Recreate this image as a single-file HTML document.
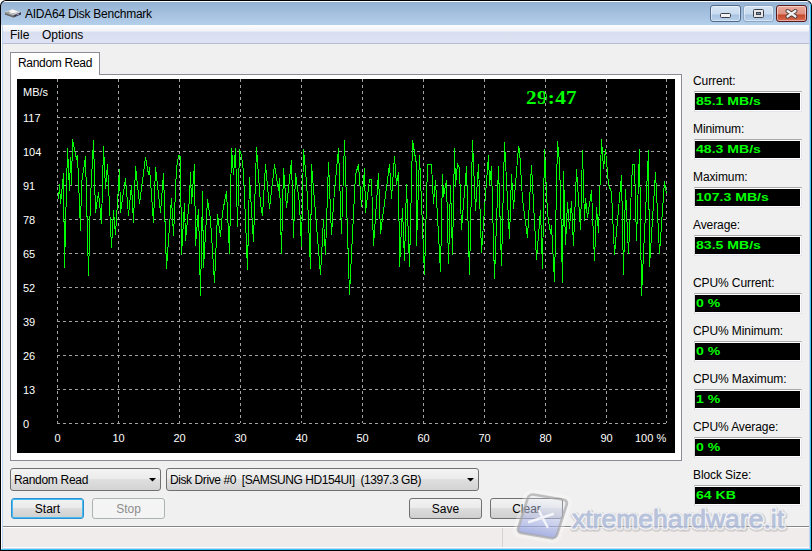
<!DOCTYPE html>
<html><head><meta charset="utf-8">
<style>
*{margin:0;padding:0;box-sizing:border-box}
html,body{width:812px;height:551px;overflow:hidden;background:#fff}
body{position:relative;font-family:"Liberation Sans",sans-serif;font-size:12px;color:#000}
.a{position:absolute}
#win{left:0;top:0;width:812px;height:551px;background:#000;border-radius:6px 6px 0 0}
#frame{left:1px;top:1px;width:810px;height:549px;border-radius:5px 5px 0 0;
 background:linear-gradient(#fafcfe 0,#fafcfe 1px,#94b2d3 1px,#b4cfea 24px,#c3dbf2 100%)}
#fr-r1{left:809px;top:5px;width:1px;height:544px;background:#c9d3ee}
#fr-r2{left:810px;top:4px;width:1px;height:546px;background:#35c3ef}
#fr-l{left:1px;top:25px;width:1px;height:525px;background:#fff}
#fr-l2{left:2px;top:25px;width:1px;height:524px;background:#bcd5f0}
#fr-b1{left:2px;top:548px;width:808px;height:1px;background:#c9d3ee}
#fr-b2{left:1px;top:549px;width:810px;height:1px;background:#35c3ef}
#client{left:3px;top:25px;width:806px;height:523px;background:#f0f0f0}
#menubar{left:3px;top:25px;width:806px;height:19px;background:linear-gradient(#fdfdfe 0,#f1f3f9 6px,#dadff0 7px,#dde3f4 18px)}
#menuline{left:3px;top:43px;width:806px;height:1px;background:#b6bdd2}
.title{left:25px;top:7px;font-size:12px;color:#000;letter-spacing:-0.25px}
.menu{top:28px;font-size:12px}
.tb{top:5px;height:17px;width:31px;border:1px solid #4f6a8c;border-radius:3px;box-shadow:inset 0 0 0 1px rgba(255,255,255,0.45);background:linear-gradient(#d6e5f4,#c9dbef 8px,#a8c3e1 9px,#b8d0ea)}
.tab{left:10px;top:52px;width:90px;height:23px;background:#fff;border:1px solid #898c95;border-bottom:none}
#panel{left:10px;top:74px;width:672px;height:387px;background:#fff;border:1px solid #898c95}
.lbl{left:693px;font-size:12px;letter-spacing:-0.1px}
.box{left:694px;width:108px;height:21px;background:#000;border:1px solid #e2e5eb;border-top-color:#a9a9a9;border-left-color:#d6d6d6;box-shadow:inset 0 1px 0 #fff,inset -1px -1px 0 #fff}
.val{position:absolute;left:1px;top:3px;font:bold 11px "Liberation Sans",sans-serif;color:#00ff00;transform:scaleX(1.28);transform-origin:0 0;white-space:nowrap}
.combo{top:468px;height:23px;border:1px solid #707070;border-radius:3px;background:linear-gradient(#f3f3f3,#ececec 45%,#dfdfdf 50%,#d3d3d3)}
.btn{top:498px;height:21px;border:1px solid #707070;border-radius:3px;background:linear-gradient(#f2f2f2,#ebebeb 45%,#dddddd 50%,#cfcfcf);text-align:center;line-height:19px;padding-top:1px}
#status{left:3px;top:526px;width:806px;height:22px;background:#f0eceb;border-top:1px solid #868686;border-bottom:1px solid #fff}
#status:before{content:"";position:absolute;left:0;top:0;width:806px;height:1px;background:#fff}
</style></head><body>
<div id="win" class="a"></div>
<div id="frame" class="a"></div>
<div id="client" class="a"></div>
<div id="fr-l" class="a"></div><div id="fr-l2" class="a"></div>
<div id="fr-r1" class="a"></div><div id="fr-r2" class="a"></div>
<div id="fr-b1" class="a"></div><div id="fr-b2" class="a"></div>
<div id="menubar" class="a"></div>
<div id="menuline" class="a"></div>
<svg class="a" style="left:0;top:0" width="30" height="25" viewBox="0 0 30 25">
 <polygon points="5,12 12.5,9 21,12.3 13.5,15.3" fill="#d0d0d0"/>
 <polygon points="8,11.6 12.5,9.6 17.5,11.6 13,13.4" fill="#f6f6f6"/>
 <polygon points="6.5,12.4 9,11.5 10.5,12.3 8,13.2" fill="#9a9a9a"/>
 <polygon points="11,14 13.5,13 15,13.6 12.5,14.5" fill="#a0a0a0"/>
 <polygon points="5,12 13.5,15.3 13.5,17.6 5,14.5" fill="#8c8c8c"/>
 <polygon points="5,13.2 13.5,16.4 13.5,17.6 5,14.5" fill="#5e5e5e"/>
 <polygon points="13.5,15.3 21,12.3 21,14.6 13.5,17.6" fill="#3c3c44"/>
 <rect x="16.5" y="13.6" width="2.5" height="1.6" fill="#8a86c0"/>
</svg>
<div class="a title">AIDA64 Disk Benchmark</div>
<div class="a menu" style="left:10px">File</div>
<div class="a menu" style="left:42px">Options</div>
<div class="a tb" style="left:710px"></div>
<div class="a tb" style="left:743px;border-color:#8ca6c4"></div>
<div class="a tb" style="left:776px;border-color:#5a1a1a;background:linear-gradient(#eaaa9c,#de8f7e 8px,#c5482b 9px,#d86c52)"></div>
<svg class="a" style="left:700px;top:0" width="112" height="25" viewBox="0 0 112 25">
 <rect x="20.5" y="13.5" width="10" height="4" rx="1" fill="#f2f2f2" stroke="#3a3f4a"/>
 <rect x="53.5" y="9.5" width="10" height="8" rx="1" fill="#e6e6e6" stroke="#3a3f4a"/>
 <rect x="56.5" y="12.5" width="4" height="2" fill="#7d93b5" stroke="#3a3f4a"/>
 <path d="M87.5 11L95.5 16.5M95.5 11L87.5 16.5" stroke="#4a3a3a" stroke-width="4" stroke-linecap="round"/>
 <path d="M87.5 11L95.5 16.5M95.5 11L87.5 16.5" stroke="#f0f0f0" stroke-width="2.2" stroke-linecap="round"/>
</svg>

<div id="panel" class="a"></div>
<div class="a tab"></div>
<div class="a" style="left:18px;top:56px;letter-spacing:-0.3px">Random Read</div>
<!--CHART-->
<svg class="a" style="left:0;top:0" width="812" height="551" viewBox="0 0 812 551">
<rect x="17" y="79" width="658" height="374" fill="#000"/>
<text transform="translate(526 104) scale(1.06 0.9)" x="0" y="0" fill="#00ff00" font-family="Liberation Serif" font-weight="bold" font-size="20px" letter-spacing="0.3">29:47</text>
<g stroke-width="1" shape-rendering="crispEdges" fill="none">
<path d="M57.5 79V424" stroke="#000"/><path d="M57.5 79V424" stroke="#a0a0a0" stroke-dasharray="3 3"/>
<path d="M118.5 79V424" stroke="#000"/><path d="M118.5 79V424" stroke="#a0a0a0" stroke-dasharray="3 3"/>
<path d="M179.5 79V424" stroke="#000"/><path d="M179.5 79V424" stroke="#a0a0a0" stroke-dasharray="3 3"/>
<path d="M240.5 79V424" stroke="#000"/><path d="M240.5 79V424" stroke="#a0a0a0" stroke-dasharray="3 3"/>
<path d="M301.5 79V424" stroke="#000"/><path d="M301.5 79V424" stroke="#a0a0a0" stroke-dasharray="3 3"/>
<path d="M362.5 79V424" stroke="#000"/><path d="M362.5 79V424" stroke="#a0a0a0" stroke-dasharray="3 3"/>
<path d="M423.5 79V424" stroke="#000"/><path d="M423.5 79V424" stroke="#a0a0a0" stroke-dasharray="3 3"/>
<path d="M484.5 79V424" stroke="#000"/><path d="M484.5 79V424" stroke="#a0a0a0" stroke-dasharray="3 3"/>
<path d="M545.5 79V424" stroke="#000"/><path d="M545.5 79V424" stroke="#a0a0a0" stroke-dasharray="3 3"/>
<path d="M606.5 79V424" stroke="#000"/><path d="M606.5 79V424" stroke="#a0a0a0" stroke-dasharray="3 3"/>
<path d="M666.5 79V424" stroke="#000"/><path d="M666.5 79V424" stroke="#a0a0a0" stroke-dasharray="3 3"/>
<path d="M57 117.5H667" stroke="#000"/><path d="M57 117.5H667" stroke="#a0a0a0" stroke-dasharray="3 3"/>
<path d="M57 151.5H667" stroke="#000"/><path d="M57 151.5H667" stroke="#a0a0a0" stroke-dasharray="3 3"/>
<path d="M57 185.5H667" stroke="#000"/><path d="M57 185.5H667" stroke="#a0a0a0" stroke-dasharray="3 3"/>
<path d="M57 219.5H667" stroke="#000"/><path d="M57 219.5H667" stroke="#a0a0a0" stroke-dasharray="3 3"/>
<path d="M57 253.5H667" stroke="#000"/><path d="M57 253.5H667" stroke="#a0a0a0" stroke-dasharray="3 3"/>
<path d="M57 287.5H667" stroke="#000"/><path d="M57 287.5H667" stroke="#a0a0a0" stroke-dasharray="3 3"/>
<path d="M57 321.5H667" stroke="#000"/><path d="M57 321.5H667" stroke="#a0a0a0" stroke-dasharray="3 3"/>
<path d="M57 355.5H667" stroke="#000"/><path d="M57 355.5H667" stroke="#a0a0a0" stroke-dasharray="3 3"/>
<path d="M57 389.5H667" stroke="#000"/><path d="M57 389.5H667" stroke="#a0a0a0" stroke-dasharray="3 3"/>
<path d="M57 423.5H667" stroke="#000"/><path d="M57 423.5H667" stroke="#a0a0a0" stroke-dasharray="3 3"/>
</g>
<g fill="#fff" font-family="Liberation Sans" font-size="11px">
<text x="23" y="96">MB/s</text>
<text x="23" y="122">117</text>
<text x="23" y="156">104</text>
<text x="23" y="190">91</text>
<text x="23" y="224">78</text>
<text x="23" y="258">65</text>
<text x="23" y="292">52</text>
<text x="23" y="326">39</text>
<text x="23" y="360">26</text>
<text x="23" y="394">13</text>
<text x="23" y="428">0</text>
<text x="57.5" y="442" text-anchor="middle">0</text>
<text x="118.5" y="442" text-anchor="middle">10</text>
<text x="179.5" y="442" text-anchor="middle">20</text>
<text x="240.5" y="442" text-anchor="middle">30</text>
<text x="301.5" y="442" text-anchor="middle">40</text>
<text x="362.5" y="442" text-anchor="middle">50</text>
<text x="423.5" y="442" text-anchor="middle">60</text>
<text x="484.5" y="442" text-anchor="middle">70</text>
<text x="545.5" y="442" text-anchor="middle">80</text>
<text x="606.5" y="442" text-anchor="middle">90</text>
<text x="635" y="442">100 %</text>
</g>
<path d="M58.5 199.5L59.5 184.5L60.5 203.5L62.5 184.5L63.5 173.5L64.5 267.5L67.5 148.5L69.5 190.5L70.5 157.5L71.5 184.5L72.5 139.5L75.5 154.5L76.5 158.5L77.5 155.5L80.5 230.5L81.5 183.5L85.5 156.5L88.5 275.5L90.5 197.5L93.5 140.5L95.5 212.5L98.5 192.5L101.5 223.5L103.5 146.5L105.5 188.5L107.5 164.5L111.5 247.5L113.5 210.5L115.5 234.5L119.5 169.5L120.5 212.5L125.5 178.5L128.5 215.5L131.5 185.5L133.5 222.5L135.5 166.5L139.5 203.5L145.5 157.5L148.5 174.5L149.5 167.5L153.5 222.5L155.5 167.5L160.5 212.5L163.5 173.5L166.5 268.5L171.5 198.5L173.5 235.5L176.5 168.5L178.5 155.5L180.5 156.5L181.5 254.5L184.5 203.5L185.5 240.5L189.5 198.5L190.5 172.5L191.5 203.5L193.5 177.5L194.5 164.5L195.5 245.5L198.5 209.5L200.5 295.5L202.5 191.5L203.5 267.5L207.5 199.5L210.5 219.5L214.5 282.5L217.5 214.5L220.5 236.5L222.5 212.5L226.5 191.5L229.5 253.5L231.5 148.5L233.5 174.5L235.5 148.5L237.5 226.5L239.5 149.5L241.5 155.5L243.5 172.5L247.5 269.5L249.5 177.5L253.5 241.5L256.5 147.5L260.5 203.5L262.5 215.5L265.5 164.5L269.5 208.5L274.5 164.5L278.5 190.5L279.5 178.5L281.5 253.5L283.5 168.5L286.5 207.5L291.5 160.5L293.5 237.5L295.5 173.5L299.5 203.5L301.5 246.5L303.5 149.5L305.5 169.5L307.5 197.5L310.5 268.5L311.5 164.5L313.5 188.5L320.5 274.5L323.5 219.5L325.5 254.5L328.5 162.5L331.5 234.5L334.5 190.5L338.5 148.5L341.5 233.5L344.5 140.5L349.5 294.5L355.5 174.5L358.5 164.5L361.5 206.5L364.5 168.5L365.5 212.5L369.5 179.5L371.5 179.5L373.5 245.5L378.5 173.5L380.5 233.5L389.5 164.5L391.5 198.5L394.5 156.5L396.5 184.5L398.5 172.5L399.5 266.5L402.5 208.5L404.5 260.5L406.5 184.5L409.5 266.5L412.5 140.5L416.5 164.5L416.5 245.5L419.5 155.5L424.5 274.5L427.5 164.5L431.5 164.5L433.5 203.5L435.5 180.5L440.5 271.5L442.5 174.5L443.5 196.5L446.5 180.5L448.5 263.5L450.5 185.5L452.5 254.5L454.5 148.5L455.5 186.5L457.5 163.5L459.5 168.5L461.5 229.5L466.5 166.5L469.5 274.5L472.5 140.5L475.5 210.5L478.5 164.5L481.5 252.5L485.5 194.5L488.5 155.5L489.5 184.5L491.5 166.5L494.5 278.5L498.5 166.5L501.5 265.5L504.5 142.5L509.5 238.5L511.5 174.5L513.5 208.5L518.5 147.5L519.5 149.5L522.5 199.5L527.5 237.5L531.5 165.5L536.5 259.5L540.5 210.5L542.5 268.5L544.5 149.5L547.5 213.5L550.5 233.5L551.5 225.5L554.5 281.5L557.5 141.5L559.5 161.5L560.5 197.5L562.5 282.5L563.5 171.5L565.5 244.5L567.5 202.5L569.5 228.5L571.5 201.5L573.5 245.5L576.5 169.5L580.5 229.5L582.5 150.5L584.5 220.5L585.5 198.5L587.5 217.5L591.5 190.5L594.5 260.5L596.5 207.5L598.5 232.5L601.5 139.5L603.5 168.5L605.5 149.5L608.5 184.5L611.5 192.5L614.5 254.5L621.5 175.5L623.5 274.5L625.5 189.5L628.5 253.5L632.5 164.5L634.5 164.5L636.5 240.5L639.5 149.5L641.5 295.5L648.5 150.5L649.5 266.5L655.5 172.5L659.5 253.5L664.5 181.5L666.5 193.5" fill="none" stroke="#00ff00" stroke-width="1" shape-rendering="crispEdges"/>
</svg>
<!--/CHART-->

<div class="a lbl" style="top:74px">Current:</div>
<div class="a box" style="top:91px"><span class="val">85.1 MB/s</span></div>
<div class="a lbl" style="top:122px">Minimum:</div>
<div class="a box" style="top:139px"><span class="val">48.3 MB/s</span></div>
<div class="a lbl" style="top:170px">Maximum:</div>
<div class="a box" style="top:187px"><span class="val">107.3 MB/s</span></div>
<div class="a lbl" style="top:218px">Average:</div>
<div class="a box" style="top:235px"><span class="val">83.5 MB/s</span></div>
<div class="a lbl" style="top:276px">CPU% Current:</div>
<div class="a box" style="top:293px"><span class="val">0 %</span></div>
<div class="a lbl" style="top:324px">CPU% Minimum:</div>
<div class="a box" style="top:341px"><span class="val">0 %</span></div>
<div class="a lbl" style="top:372px">CPU% Maximum:</div>
<div class="a box" style="top:389px"><span class="val">1 %</span></div>
<div class="a lbl" style="top:420px">CPU% Average:</div>
<div class="a box" style="top:437px"><span class="val">0 %</span></div>
<div class="a lbl" style="top:468px">Block Size:</div>
<div class="a box" style="top:485px"><span class="val">64 KB</span></div>

<div class="a combo" style="left:10px;width:151px"></div>
<div class="a" style="left:14px;top:473px;letter-spacing:-0.3px">Random Read</div>
<div class="a combo" style="left:166px;width:313px"></div>
<div class="a" style="left:170px;top:473px;letter-spacing:-0.42px">Disk Drive #0&nbsp; [SAMSUNG HD154UI]&nbsp; (1397.3 GB)</div>
<svg class="a" style="left:0;top:470px" width="812" height="20" viewBox="0 470 812 20">
 <polygon points="149,478 156,478 152.5,481.5" fill="#000"/>
 <polygon points="467,478 474,478 470.5,481.5" fill="#000"/>
</svg>
<div class="a btn" style="left:11px;width:73px;border-color:#2d8fcf;box-shadow:inset 0 0 0 1px #45bdf0">Start</div>
<div class="a btn" style="left:92px;width:73px;border-color:#adb2b5;background:#f4f4f4;color:#8d8d8d">Stop</div>
<div class="a btn" style="left:409px;width:73px">Save</div>
<div class="a btn" style="left:490px;width:73px">Clear</div>

<div id="status" class="a"></div>
<div class="a" style="left:502px;top:528px;width:1px;height:19px;background:#d5d2d0"></div>
<!--WM-->
<svg class="a" style="left:0;top:0" width="812" height="551" viewBox="0 0 812 551">
 <defs>
  <linearGradient id="wg" x1="0" y1="0" x2="0" y2="1">
   <stop offset="0" stop-color="#f4f6fc" stop-opacity="0.25"/><stop offset="0.45" stop-color="#c4ccf0" stop-opacity="0.7"/><stop offset="1" stop-color="#8e9de0" stop-opacity="1"/>
  </linearGradient>
 </defs>
 <g transform="matrix(1.05 0.18 -0.33 1.04 528 492)">
  <rect x="-1" y="-1" width="42" height="42" rx="6" fill="none" stroke="#fff" stroke-opacity="0.3" stroke-width="4"/>
  <rect x="1.5" y="1.5" width="37" height="37" rx="4" fill="url(#wg)" fill-opacity="0.75" stroke="#a8a8a8" stroke-opacity="0.7" stroke-width="2.5"/>
 </g>
 <path d="M529 522L553 514M539 511L547.5 527" stroke="#fff" stroke-opacity="0.8" stroke-width="2.4" stroke-linecap="round"/>
 <g opacity="0.85">
 <text x="572" y="528.5" font-family="Liberation Sans" font-size="25px" textLength="212" lengthAdjust="spacingAndGlyphs" fill="#b0b0b0" stroke="#b0b0b0" stroke-opacity="0.55" fill-opacity="0.55" stroke-width="5.5" stroke-linejoin="round" transform="translate(0.8 0.8)">xtremehardware.it</text>
 <text x="572" y="528" font-family="Liberation Sans" font-size="25px" textLength="212" lengthAdjust="spacingAndGlyphs" fill="#f6f6f6" stroke="#f4f4f6" stroke-width="3.6" stroke-linejoin="round">xtremehardware.it</text>
 <text x="572" y="528" font-family="Liberation Sans" font-size="25px" textLength="212" lengthAdjust="spacingAndGlyphs" fill="#aebad8" stroke="#aebad8" stroke-width="0.9" stroke-linejoin="round">xtremehardware.it</text>
 </g>
</svg>
<!--/WM-->
</body></html>
